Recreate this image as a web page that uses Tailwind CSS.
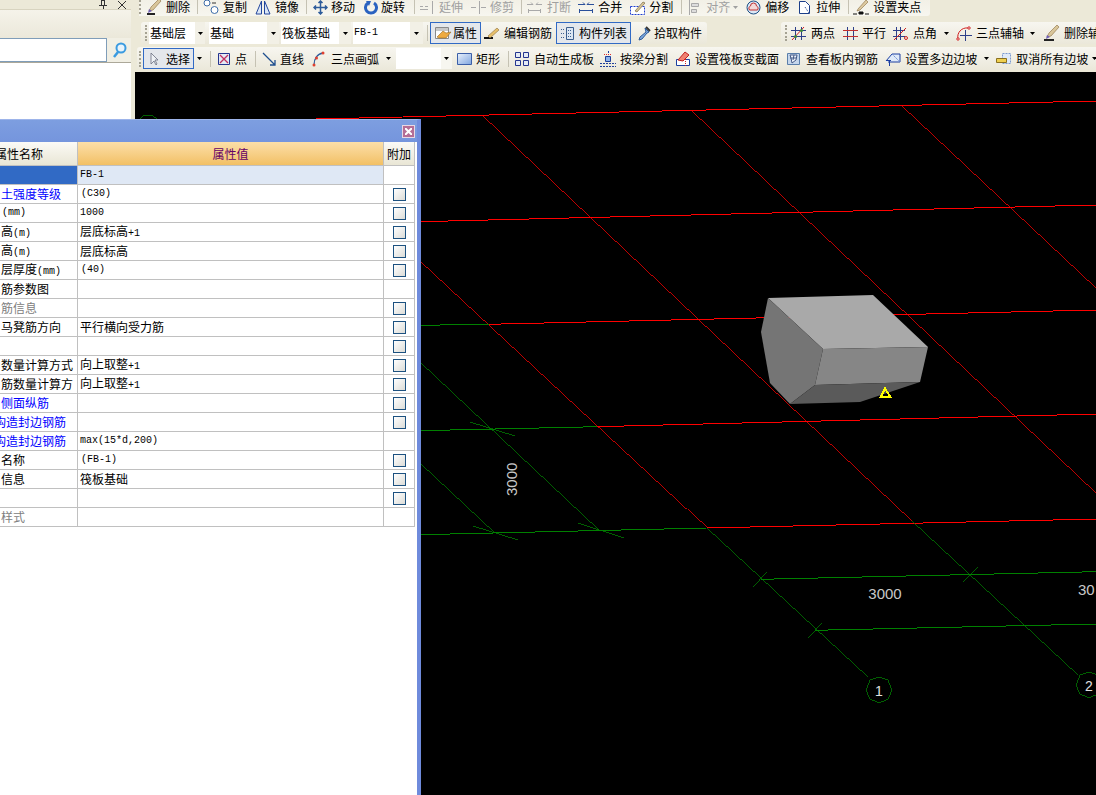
<!DOCTYPE html>
<html lang="zh">
<head>
<meta charset="utf-8">
<script src="https://cdn.jsdelivr.net/npm/@tailwindcss/browser@4"></script>
<title>筏板基础</title>
</head>
<body class="m-0">
<div class="relative flex w-[1096px] h-[795px] overflow-hidden bg-[#ece9d8] text-[12px] leading-[14px] text-black whitespace-nowrap font-['Noto_Sans_CJK_SC','Noto_Sans',sans-serif]">

  <!-- left panel -->
  <aside class="w-[135px] shrink-0 flex flex-col border-r-[4px] border-[#ece9d8]">
    <div class="h-[10px] flex items-center justify-end bg-[#ece9d8] border-b border-[#d8d4c0] pr-[5px] gap-[11px] overflow-hidden">
      <svg class="w-[8px] h-[10px]" viewBox="0 0 8 10"><path d="M2.500 0h3v5h-3zM0 5.500h8M4 5v5" fill="none" stroke="#333" shape-rendering="crispEdges"/></svg>
      <svg class="w-[8px] h-[8px]" viewBox="0 0 8 8"><path d="M0 0l8 8M8 0L0 8" stroke="#333"/></svg>
    </div>
    <div class="h-[28px] bg-gradient-to-b from-[#f5f3ea] to-[#ebe8da]"></div>
    <div class="h-[24px] flex items-center bg-[#f1efe4]">
      <div class="w-[107px] h-[24px] bg-white border border-[#7f9db9] border-l-0"></div>
      <svg class="ml-[5px] w-[15px] h-[16px]" viewBox="0 0 15 16"><circle cx="9" cy="6" r="4.500" fill="#e8f3fb" stroke="#3b9be0" stroke-width="2"/><path d="M6 10l-4 5" stroke="#3b9be0" stroke-width="2.500"/></svg>
    </div>
    <div class="flex-1 bg-white border-t border-[#aca899]"></div>
  </aside>

  <!-- main -->
  <main class="flex-1 min-w-0 flex flex-col overflow-hidden">
    <!-- row 1 -->
    <div class="h-[16px] pb-[2px] box-border flex items-center w-[791px] ml-[4px] -mr-[4px] shrink-0 bg-gradient-to-b from-[#f2f0e6] to-[#f7f6ef] rounded-br-[3px] overflow-hidden">
      <span class="w-[2px] h-[14px] shrink-0 border-l-2 border-dotted border-[#a5a293]"></span>
      <div class="flex items-center shrink-0 ml-[5px] gap-[4px]"><svg class="w-[16px] h-[16px]" viewBox="0 0 16 16"><path d="M1 15h8" stroke="#222" stroke-width="2"/><path d="M3 12l4-1 8-9-2-2-8 8z" fill="#d9c69a" stroke="#8a6d3f" stroke-width=".6"/><path d="M2 14l1-4 3 2z" fill="#6f5fb5"/></svg>删除</div>
      <span class="ml-[7px] w-px h-[14px] shrink-0 bg-[#c5c2b3]"></span>
      <div class="flex items-center shrink-0 ml-[5px] gap-[4px]"><svg class="w-[16px] h-[16px]" viewBox="0 0 16 16" fill="#fff" stroke="#3d6ca8"><circle cx="4" cy="4" r="3"/><circle cx="11.500" cy="11" r="3.500"/><path d="M9 4h4" stroke="#333"/></svg>复制</div>
      <div class="flex items-center shrink-0 ml-[8px] gap-[3px]"><svg class="w-[16px] h-[16px]" viewBox="0 0 16 16" fill="#dbe7f7" stroke="#24479c"><path d="M6.500 2v13H1zM9.500 2v13H15z"/></svg><span class="ml-[1px]">镜像</span></div>
      <span class="ml-[7px] w-px h-[14px] shrink-0 bg-[#c5c2b3]"></span>
      <div class="flex items-center shrink-0 ml-[6px] gap-[3px]"><svg class="w-[15px] h-[15px]" viewBox="0 0 15 15"><path d="M7.500 1v13M1 7.500h13M5.500 3l2-2 2 2M5.500 12l2 2 2-2M3 5.500l-2 2 2 2M12 5.500l2 2-2 2" fill="none" stroke="#2d5b9a" stroke-width="1.500"/></svg>移动</div>
      <div class="flex items-center shrink-0 ml-[9px] gap-[3px]"><svg class="w-[14px] h-[15px]" viewBox="0 0 14 15"><path d="M4 3a5.500 5.500 0 1 0 6 0" fill="none" stroke="#2a62c0" stroke-width="3"/><path d="M2 1l5 0-2 5z" fill="#2a62c0"/></svg>旋转</div>
      <span class="ml-[9px] w-px h-[14px] shrink-0 bg-[#c5c2b3]"></span>
      <div class="flex items-center shrink-0 ml-[5px] gap-[4px] text-[#a0a0a0]"><svg class="w-[15px] h-[15px]" viewBox="0 0 15 15"><path d="M0 6.500h3M5 6.500h3M0 9.500h8M12.500 1v13" stroke="#a9a9a9" fill="none"/></svg>延伸</div>
      <div class="flex items-center shrink-0 ml-[8px] gap-[4px] text-[#a0a0a0]"><svg class="w-[15px] h-[15px]" viewBox="0 0 15 15"><path d="M0 7.500h5M8.500 1v13M10 7.500h5" stroke="#a9a9a9" fill="none"/></svg>修剪</div>
      <span class="ml-[7px] w-px h-[14px] shrink-0 bg-[#c5c2b3]"></span>
      <div class="flex items-center shrink-0 ml-[5px] gap-[5px] text-[#a0a0a0]"><svg class="w-[15px] h-[15px]" viewBox="0 0 15 15"><path d="M0 4.500h6l-2-2M15 4.500H9l2-2M1 10.500h13M1.500 9v4M13.500 9v4" stroke="#a9a9a9" fill="none"/></svg>打断</div>
      <div class="flex items-center shrink-0 ml-[7px] gap-[4px]"><svg class="w-[16px] h-[15px]" viewBox="0 0 16 15"><path d="M0 4.500h7l-2-2M16 4.500H9l2-2M1 10.500h14M1.500 9v4M14.500 9v4" stroke="#2a4f9a" fill="none"/></svg>合并</div>
      <div class="flex items-center shrink-0 ml-[8px] gap-[4px]"><svg class="w-[15px] h-[15px]" viewBox="0 0 15 15"><path d="M.5 6.500h14v8H.500z" fill="#fff" stroke="#1e3fd0" stroke-dasharray="2 1"/><path d="M5 11l8-9 2 1-8 9z" fill="#d9c69a" stroke="#6a5a30" stroke-width=".6"/></svg>分割</div>
      <span class="ml-[8px] w-px h-[14px] shrink-0 bg-[#c5c2b3]"></span>
      <div class="flex items-center shrink-0 ml-[6px] gap-[6px] text-[#a0a0a0]"><svg class="w-[12px] h-[15px]" viewBox="0 0 12 15"><path d="M1.500 0v15M3.500 3.500h7v3h-7zM3.500 9.500h5v3h-5z" stroke="#a9a9a9" fill="#ddd"/></svg>对齐</div>
      <svg class="ml-[3px] w-[5px] h-[3px] shrink-0" viewBox="0 0 5 3"><path d="M0 0h5L2.500 3z" fill="#a0a0a0"/></svg>
      <div class="flex items-center shrink-0 ml-[8px] gap-[4px]"><svg class="w-[15px] h-[15px]" viewBox="0 0 15 15"><circle cx="7.500" cy="7.500" r="6.500" fill="#dbe7f5" stroke="#1c4f86"/><path d="M3.500 10a2.500 2.500 0 0 1 1-4 3 3 0 0 1 6 0 2.500 2.500 0 0 1 1 4z" fill="#f3d9d9" stroke="#c03030"/></svg>偏移</div>
      <div class="flex items-center shrink-0 ml-[8px] gap-[4px]"><svg class="w-[15px] h-[15px]" viewBox="0 0 15 15"><path d="M2.500 1.500h6l4 4v8h-10z" fill="#fff" stroke="#1c3f8a"/><path d="M8 7l4 6" stroke="#1c3f8a" stroke-dasharray="1 1"/></svg>拉伸</div>
      <span class="ml-[8px] w-px h-[14px] shrink-0 bg-[#c5c2b3]"></span>
      <div class="flex items-center shrink-0 ml-[4px] gap-[4px]"><svg class="w-[16px] h-[16px]" viewBox="0 0 16 16"><path d="M0 15h4M6 13h4v2H6zM12 15h4" stroke="#111" fill="#111"/><path d="M5 10l8-9 2 2-8 8-3 1z" fill="#dcc9a0" stroke="#8a6d3f" stroke-width=".6"/></svg>设置夹点</div>
    </div>

    <!-- row 2 -->
    <div class="mt-[6px] h-[22px] flex items-center shrink-0">
      <div class="w-[566px] h-[22px] shrink-0 ml-[6px] flex items-center bg-gradient-to-b from-[#f7f6f0] to-[#ebe8da] rounded-[3px] overflow-hidden">
        <span class="ml-[4px] w-[2px] h-[16px] shrink-0 border-l-2 border-dotted border-[#a5a293]"></span>
        <div class="ml-[2px] flex h-[22px] shrink-0"><div class="w-[46px] bg-white pl-[1px] flex items-center">基础层</div><div class="w-[10px] bg-[#f2f0e6] flex items-center justify-center"><svg class="w-[5px] h-[3px]" viewBox="0 0 5 3"><path d="M0 0h5L2.500 3z"/></svg></div></div>
        <div class="ml-[4px] flex h-[22px] shrink-0"><div class="w-[58px] bg-white pl-[1px] flex items-center">基础</div><div class="w-[12px] bg-[#f2f0e6] flex items-center justify-center"><svg class="w-[5px] h-[3px]" viewBox="0 0 5 3"><path d="M0 0h5L2.500 3z"/></svg></div></div>
        <div class="ml-[2px] flex h-[22px] shrink-0"><div class="w-[58px] bg-white pl-[1px] flex items-center">筏板基础</div><div class="w-[12px] bg-[#f2f0e6] flex items-center justify-center"><svg class="w-[5px] h-[3px]" viewBox="0 0 5 3"><path d="M0 0h5L2.500 3z"/></svg></div></div>
        <div class="ml-[2px] flex h-[22px] shrink-0"><div class="w-[57px] bg-white pl-[1px] flex items-center font-['Liberation_Mono',monospace] text-[10px]">FB-1</div><div class="w-[13px] bg-[#f2f0e6] flex items-center justify-center"><svg class="w-[5px] h-[3px]" viewBox="0 0 5 3"><path d="M0 0h5L2.500 3z"/></svg></div></div>
        <span class="ml-[4px] w-px h-[16px] shrink-0 bg-[#c5c2b3]"></span>
        <div class="ml-[2px] w-[51px] h-[22px] shrink-0 flex items-center bg-[#e4e7ec] border border-[#316ac5] box-border"><svg class="ml-[3px] w-[18px] h-[16px]" viewBox="0 0 18 16"><path d="M1.500 2.500h13v11h-13z" fill="#fff" stroke="#8a8a8a"/><path d="M2 3h12v3H2z" fill="#c8c8c8"/><path d="M3 12l6-6 3 2 5-1-5 6H5z" fill="#eeaa40" stroke="#9a6b20" stroke-width=".6"/></svg><span class="ml-[1px]">属性</span></div>
        <div class="ml-[3px] flex items-center shrink-0 gap-[4px]"><svg class="w-[16px] h-[16px]" viewBox="0 0 16 16"><path d="M0 13h9" stroke="#111" stroke-width="2"/><path d="M4 11l9-8 2 2-9 8z" fill="#e8c06a" stroke="#8a6d3f" stroke-width=".6"/></svg>编辑钢筋</div>
        <div class="ml-[4px] w-[75px] h-[22px] shrink-0 flex items-center bg-[#e4e7ec] border border-[#316ac5] box-border"><svg class="ml-[3px] w-[15px] h-[15px]" viewBox="0 0 15 15"><path d="M6.500 1.500h7v12h-7z" fill="#dce6f3" stroke="#3d5f8f"/><path d="M8 4.500h4M8 7.500h4M8 10.500h4M1 3.500h3M1 7.500h3M1 11.500h3" stroke="#3d5f8f" stroke-dasharray="1 1"/></svg><span class="ml-[4px]">构件列表</span></div>
        <div class="ml-[5px] flex items-center shrink-0 gap-[3px]"><svg class="w-[15px] h-[15px]" viewBox="0 0 15 15"><path d="M9 2l4 4-2 1-5 6-3 1 1-3 6-5z" fill="#7ea8dc" stroke="#2d5b9a"/><path d="M10 1l4 4" stroke="#333" stroke-width="2"/></svg>拾取构件</div>
      </div>
      <div class="ml-[74px] w-[315px] h-[22px] shrink-0 flex items-center bg-gradient-to-b from-[#f7f6f0] to-[#ebe8da] rounded-l-[3px] overflow-hidden">
        <span class="ml-[4px] w-[2px] h-[16px] shrink-0 border-l-2 border-dotted border-[#a5a293]"></span>
        <div class="ml-[4px] flex items-center shrink-0 gap-[5px]"><svg class="w-[15px] h-[15px]" viewBox="0 0 15 15"><path d="M4.500 1v13M10.500 1v13M0 4.500h15M0 10.500h15" stroke="#2d3f8a"/><path d="M1 14L13 1" stroke="#d02020"/><circle cx="4.500" cy="10.500" r="1.500" fill="#3a8a3a"/><circle cx="10.500" cy="4.500" r="1.500" fill="#3a8a3a"/></svg>两点</div>
        <div class="ml-[8px] flex items-center shrink-0 gap-[4px]"><svg class="w-[15px] h-[15px]" viewBox="0 0 15 15"><path d="M4.500 1v13M10.500 1v13" stroke="#2d3f8a"/><path d="M0 4.500h15M0 10.500h15" stroke="#c03030"/></svg>平行</div>
        <div class="ml-[7px] flex items-center shrink-0 gap-[5px]"><svg class="w-[15px] h-[15px]" viewBox="0 0 15 15"><path d="M3.500 1v13M7.500 1v13M0 4.500h12M0 10.500h12" stroke="#2d3f8a"/><path d="M1 14L13 2" stroke="#d02020"/><circle cx="13" cy="12" r="1.500" fill="none" stroke="#d02020"/></svg>点角</div>
        <svg class="ml-[7px] w-[5px] h-[3px] shrink-0" viewBox="0 0 5 3"><path d="M0 0h5L2.500 3z"/></svg>
        <div class="ml-[7px] flex items-center shrink-0 gap-[4px]"><svg class="w-[16px] h-[15px]" viewBox="0 0 16 15"><path d="M2 13A9 9 0 0 1 12 2" fill="none" stroke="#d02020"/><path d="M9.500 4v11M4 9.500h12" stroke="#2d3f8a"/><circle cx="2" cy="13" r="1.200" fill="#fff" stroke="#d02020"/><circle cx="13" cy="2" r="1.200" fill="#fff" stroke="#d02020"/></svg>三点辅轴</div>
        <svg class="ml-[6px] w-[5px] h-[3px] shrink-0" viewBox="0 0 5 3"><path d="M0 0h5L2.500 3z"/></svg>
        <div class="ml-[8px] flex items-center shrink-0 gap-[4px]"><svg class="w-[17px] h-[16px]" viewBox="0 0 17 16"><path d="M1 15h10" stroke="#222" stroke-width="2"/><path d="M4 12l4-1 8-9-2-2-8 8z" fill="#d9c69a" stroke="#8a6d3f" stroke-width=".6"/><path d="M3 14l1-4 3 2z" fill="#6f5fb5"/></svg>删除辅轴</div>
      </div>
    </div>

    <!-- row 3 -->
    <div class="mt-[3px] h-[23px] ml-[2px] -mr-[2px] flex items-center shrink-0 bg-gradient-to-b from-[#f7f6f0] to-[#ebe8da] rounded-l-[3px] overflow-hidden">
      <span class="ml-[2px] w-[2px] h-[16px] shrink-0 border-l-2 border-dotted border-[#a5a293]"></span>
      <div class="ml-[2px] w-[51px] h-[21px] shrink-0 flex items-center bg-[#e4e7ec] border border-[#316ac5] box-border"><svg class="ml-[6px] w-[9px] h-[14px]" viewBox="0 0 9 14"><path d="M1 1v11l3-3 2 4 1-1-2-4h3z" fill="#eef1f5" stroke="#6a6f80" stroke-width=".8"/></svg><span class="ml-[7px]">选择</span></div>
      <svg class="ml-[3px] w-[5px] h-[3px] shrink-0" viewBox="0 0 5 3"><path d="M0 0h5L2.500 3z"/></svg>
      <span class="ml-[8px] w-px h-[16px] shrink-0 bg-[#c5c2b3]"></span>
      <div class="ml-[7px] flex items-center shrink-0 gap-[5px]"><svg class="w-[12px] h-[12px]" viewBox="0 0 12 12"><path d="M.5.500h11v11H.500z" fill="#e4eaf5" stroke="#24358f"/><path d="M2 2l8 8M10 2l-8 8" stroke="#c03060" stroke-width="1.300"/></svg>点</div>
      <span class="ml-[8px] w-px h-[16px] shrink-0 bg-[#c5c2b3]"></span>
      <div class="ml-[6px] flex items-center shrink-0 gap-[4px]"><svg class="w-[14px] h-[14px]" viewBox="0 0 14 14"><path d="M1 1l12 12M13 8v5H8" fill="none" stroke="#1f4f8f" stroke-width="1.300"/></svg>直线</div>
      <div class="ml-[8px] flex items-center shrink-0 gap-[6px]"><svg class="w-[13px] h-[16px]" viewBox="0 0 13 16"><path d="M2 14C2 8 5 3 11 2" fill="none" stroke="#2a5a9a" stroke-width="1.300"/><circle cx="2" cy="14" r="1.500" fill="#e04030"/><circle cx="4.500" cy="7" r="1.500" fill="#e04030"/><circle cx="11" cy="2" r="1.500" fill="#e04030"/></svg>三点画弧</div>
      <svg class="ml-[7px] w-[5px] h-[3px] shrink-0" viewBox="0 0 5 3"><path d="M0 0h5L2.500 3z"/></svg>
      <div class="ml-[5px] flex h-[21px] shrink-0"><div class="w-[45px] bg-white"></div><div class="w-[11px] bg-[#f7f6f0] flex items-center justify-center"><svg class="w-[5px] h-[3px]" viewBox="0 0 5 3"><path d="M0 0h5L2.500 3z"/></svg></div></div>
      <div class="ml-[5px] flex items-center shrink-0 gap-[4px]"><svg class="w-[15px] h-[12px]" viewBox="0 0 15 12"><defs><linearGradient id="r1" x1="0" y1="0" x2="1" y2="1"><stop offset="0" stop-color="#eaf1fb"/><stop offset="1" stop-color="#7fa5e0"/></linearGradient></defs><path d="M.5.500h14v11H.500z" fill="url(#r1)" stroke="#3b5fa8"/></svg>矩形</div>
      <span class="ml-[8px] w-px h-[16px] shrink-0 bg-[#c5c2b3]"></span>
      <div class="ml-[6px] flex items-center shrink-0 gap-[5px]"><svg class="w-[14px] h-[14px]" viewBox="0 0 14 14" fill="#e4eaf5" stroke="#24358f"><path d="M.5.500h5v5h-5zM8.500.500h5v5h-5zM.5 8.500h5v5h-5zM8.500 8.500h5v5h-5z"/></svg>自动生成板</div>
      <div class="ml-[6px] flex items-center shrink-0 gap-[4px]"><svg class="w-[16px] h-[16px]" viewBox="0 0 16 16"><path d="M5.500 5.500h5v5h-5z" fill="#8eb4ea" stroke="#1f3f9a"/><path d="M0 12.500h16M0 15.500h16M8.500 0v4" stroke="#1f3f9a" stroke-dasharray="2 1"/><path d="M4 3.500h8" stroke="#e03030" stroke-dasharray="1 1"/></svg>按梁分割</div>
      <div class="ml-[7px] flex items-center shrink-0 gap-[4px]"><svg class="w-[16px] h-[16px]" viewBox="0 0 16 16"><path d="M1.500 8.500h13v6h-13z" fill="#fff" stroke="#1c3fa0"/><path d="M3 9l7-8 4 3-6 6z" fill="#f08070" stroke="#c02020"/><path d="M10.500 8v8" stroke="#d02020" stroke-dasharray="1 1"/></svg>设置筏板变截面</div>
      <div class="ml-[7px] flex items-center shrink-0 gap-[5px]"><svg class="w-[15px] h-[15px]" viewBox="0 0 15 15"><path d="M1.500 2.500h12v11h-12z" fill="#c5d6ec" stroke="#5a7eaa"/><path d="M4 4h7l-1 5-4 3-1-5zM4 7h6M8 4l-1 5" fill="#eef3fa" stroke="#445a88"/></svg>查看板内钢筋</div>
      <div class="ml-[7px] flex items-center shrink-0 gap-[4px]"><svg class="w-[16px] h-[16px]" viewBox="0 0 16 16"><path d="M1 10L7 3h8v8H3" fill="#dfeaf8" stroke="#1c3fa0"/><path d="M4.500 15V9M1 9.500h5" stroke="#1c3fa0"/><path d="M7 3l8 8" stroke="#6a8ad0" stroke-dasharray="2 1"/></svg>设置多边边坡</div>
      <svg class="ml-[7px] w-[5px] h-[3px] shrink-0" viewBox="0 0 5 3"><path d="M0 0h5L2.500 3z"/></svg>
      <div class="ml-[7px] flex items-center shrink-0 gap-[4px]"><svg class="w-[16px] h-[15px]" viewBox="0 0 16 15"><path d="M6.500 2.500h8v10h-8z" fill="#dfeaf8" stroke="#7a9ad0" stroke-dasharray="2 1"/><path d="M.5 7.500h10v4H.500z" fill="#efd050" stroke="#8a7020"/></svg>取消所有边坡</div>
      <svg class="ml-[4px] w-[5px] h-[3px] shrink-0" viewBox="0 0 5 3"><path d="M0 0h5L2.500 3z"/></svg>
    </div>

    <!-- 3D canvas -->
    <div class="mt-[2px] flex-1 min-h-0 bg-black overflow-hidden">
      <svg class="block w-[961px] h-[723px]" viewBox="135 72 961 723" fill="none" font-family="'Liberation Sans',sans-serif">
        <g shape-rendering="crispEdges" stroke="#ff0000" stroke-width="1">
          <path d="M316 119L1096 101M420 221.700L1096 205M489 324.300L1096 310M597 426.700L1096 414M707 528L1096 519"/>
          <path d="M420 261L707 528M482 115L912 521M692 111L1096 493M902 106L1096 288" stroke-width=".75"/>
        </g>
        <g shape-rendering="crispEdges" stroke="#008000" stroke-width="1">
          <path d="M420 325.300L489 324.300M420 430.700L597 426.700M420 534.700L707 528M760.700 579.300L1096 571.700M815 630.300L1096 624"/>
          <path d="M707 528L868 677M912 521L1078 675M420 362L599 530M420 463L495 533" stroke-width=".75"/>
          <path d="M470 422L515 436M473 526L518 540M578 523L624 538M753 587L767 572M808 638L822 623M963 582L978 567" stroke-width=".75"/>
          <path d="M139 120L144 115L152 115L158 120" stroke-width=".75"/>
          <polygon stroke-width=".75" points="879,677 888,680 892,690 888,699 879,703 870,699 866,690 870,680"/>
          <polygon stroke-width=".75" points="1089,672 1098,675 1102,685 1098,694 1089,698 1080,694 1076,685 1080,675"/>
        </g>
        <polygon points="768,298 873,295 928,347 823,349" fill="#a9a9a9"/>
        <polygon points="768,298 823,349 815,385 790,404 770,383 761,332" fill="#757575"/>
        <polygon points="823,349 928,347 920,382 815,385" fill="#868686"/>
        <polygon points="815,385 920,382 860,402 790,404" fill="#5a5a5a"/>
        <polygon points="885,388.500 890,396.500 881,396.500" stroke="#ffff00" stroke-width="2" shape-rendering="crispEdges"/>
        <g fill="#c8c8c8" font-size="15">
          <text x="885" y="599" text-anchor="middle">3000</text>
          <text x="1078" y="595">30</text>
          <text transform="translate(517 496) rotate(-90)">3000</text>
          <text x="879" y="696" text-anchor="middle" fill="#e0e0e0" font-size="14">1</text>
          <text x="1089" y="691" text-anchor="middle" fill="#e0e0e0" font-size="14">2</text>
        </g>
      </svg>
    </div>
  </main>

  <!-- properties dialog -->
  <section class="absolute left-0 top-[119px] w-[421px] h-[676px] flex flex-col bg-[#7690dc] border-r-[4px] border-t border-[#6f8bdc] border-t-[#9db4ea] box-border">
    <div class="h-[22px] shrink-0 flex items-center justify-end pr-[2px] bg-gradient-to-b from-[#7d9ee0] to-[#7595dd]">
      <div class="w-[13px] h-[13px] flex items-center justify-center bg-[#b56e96] border border-[#e8d8e4]"><svg class="w-[7px] h-[7px]" viewBox="0 0 7 7"><path d="M0 0l7 7M7 0L0 7" stroke="#fff" stroke-width="2"/></svg></div>
    </div>
    <div class="flex-1 bg-white pr-[2px]">
      <div class="w-[415px] border-r border-[#c0c0c0] box-border">
        <div class="flex h-[24px] border-b border-[#c0c0c0] box-border">
          <div class="w-[78px] shrink-0 overflow-hidden flex items-center border-r border-[#c0c0c0] bg-gradient-to-b from-[#fbfaf6] to-[#e9e6d5]"><span class="ml-[-5px]">属性名称</span></div>
          <div class="w-[306px] shrink-0 flex items-center justify-center border-r border-[#c0c0c0] text-[#660066] bg-gradient-to-b from-[#fcdfa8] to-[#f2c064]">属性值</div>
          <div class="flex-1 flex items-center justify-center bg-gradient-to-b from-[#fbfaf6] to-[#e9e6d5]">附加</div>
        </div>

        <div class="flex h-[19px] border-b border-[#c0c0c0] box-border"><div class="w-[78px] shrink-0 border-r border-[#c0c0c0] bg-[#316ac5]"></div><div class="w-[306px] shrink-0 border-r border-[#c0c0c0] bg-[#dfe8f5] pl-[2px] flex items-center font-['Liberation_Mono',monospace] text-[10px]">FB-1</div><div class="flex-1"></div></div>

        <div class="flex h-[19px] border-b border-[#c0c0c0] box-border"><div class="w-[78px] shrink-0 overflow-hidden border-r border-[#c0c0c0] flex items-center pl-[1px] text-[#0000ff]">土强度等级</div><div class="w-[306px] shrink-0 border-r border-[#c0c0c0] pl-[3px] flex items-center font-['Liberation_Mono',monospace] text-[10px]">(C30)</div><div class="flex-1 flex items-center justify-center"><span class="w-[13px] h-[13px] border border-[#1c5180] bg-gradient-to-br from-white to-[#dcdcd7]"></span></div></div>

        <div class="flex h-[19px] border-b border-[#c0c0c0] box-border"><div class="w-[78px] shrink-0 overflow-hidden border-r border-[#c0c0c0] flex items-center pl-[2px] font-['Liberation_Mono',monospace] text-[10px]">(mm)</div><div class="w-[306px] shrink-0 border-r border-[#c0c0c0] pl-[2px] flex items-center font-['Liberation_Mono',monospace] text-[10px]">1000</div><div class="flex-1 flex items-center justify-center"><span class="w-[13px] h-[13px] border border-[#1c5180] bg-gradient-to-br from-white to-[#dcdcd7]"></span></div></div>

        <div class="flex h-[19px] border-b border-[#c0c0c0] box-border"><div class="w-[78px] shrink-0 overflow-hidden border-r border-[#c0c0c0] flex items-center pl-[1px]"><span>高<span class="font-['Liberation_Mono',monospace] text-[10px]">(m)</span></span></div><div class="w-[306px] shrink-0 border-r border-[#c0c0c0] pl-[2px] flex items-center"><span>层底标高<span class="font-['Liberation_Mono',monospace] text-[10px]">+1</span></span></div><div class="flex-1 flex items-center justify-center"><span class="w-[13px] h-[13px] border border-[#1c5180] bg-gradient-to-br from-white to-[#dcdcd7]"></span></div></div>

        <div class="flex h-[19px] border-b border-[#c0c0c0] box-border"><div class="w-[78px] shrink-0 overflow-hidden border-r border-[#c0c0c0] flex items-center pl-[1px]"><span>高<span class="font-['Liberation_Mono',monospace] text-[10px]">(m)</span></span></div><div class="w-[306px] shrink-0 border-r border-[#c0c0c0] pl-[2px] flex items-center">层底标高</div><div class="flex-1 flex items-center justify-center"><span class="w-[13px] h-[13px] border border-[#1c5180] bg-gradient-to-br from-white to-[#dcdcd7]"></span></div></div>

        <div class="flex h-[19px] border-b border-[#c0c0c0] box-border"><div class="w-[78px] shrink-0 overflow-hidden border-r border-[#c0c0c0] flex items-center pl-[1px]"><span>层厚度<span class="font-['Liberation_Mono',monospace] text-[10px]">(mm)</span></span></div><div class="w-[306px] shrink-0 border-r border-[#c0c0c0] pl-[3px] flex items-center font-['Liberation_Mono',monospace] text-[10px]">(40)</div><div class="flex-1 flex items-center justify-center"><span class="w-[13px] h-[13px] border border-[#1c5180] bg-gradient-to-br from-white to-[#dcdcd7]"></span></div></div>

        <div class="flex h-[19px] border-b border-[#c0c0c0] box-border"><div class="w-[78px] shrink-0 overflow-hidden border-r border-[#c0c0c0] flex items-center pl-[1px]">筋参数图</div><div class="w-[306px] shrink-0 border-r border-[#c0c0c0]"></div><div class="flex-1"></div></div>

        <div class="flex h-[19px] border-b border-[#c0c0c0] box-border"><div class="w-[78px] shrink-0 overflow-hidden border-r border-[#c0c0c0] flex items-center pl-[1px] text-[#808080]">筋信息</div><div class="w-[306px] shrink-0 border-r border-[#c0c0c0]"></div><div class="flex-1 flex items-center justify-center"><span class="w-[13px] h-[13px] border border-[#1c5180] bg-gradient-to-br from-white to-[#dcdcd7]"></span></div></div>

        <div class="flex h-[19px] border-b border-[#c0c0c0] box-border"><div class="w-[78px] shrink-0 overflow-hidden border-r border-[#c0c0c0] flex items-center pl-[1px]">马凳筋方向</div><div class="w-[306px] shrink-0 border-r border-[#c0c0c0] pl-[2px] flex items-center">平行横向受力筋</div><div class="flex-1 flex items-center justify-center"><span class="w-[13px] h-[13px] border border-[#1c5180] bg-gradient-to-br from-white to-[#dcdcd7]"></span></div></div>

        <div class="flex h-[19px] border-b border-[#c0c0c0] box-border"><div class="w-[78px] shrink-0 border-r border-[#c0c0c0]"></div><div class="w-[306px] shrink-0 border-r border-[#c0c0c0]"></div><div class="flex-1 flex items-center justify-center"><span class="w-[13px] h-[13px] border border-[#1c5180] bg-gradient-to-br from-white to-[#dcdcd7]"></span></div></div>

        <div class="flex h-[19px] border-b border-[#c0c0c0] box-border"><div class="w-[78px] shrink-0 overflow-hidden border-r border-[#c0c0c0] flex items-center pl-[1px]">数量计算方式</div><div class="w-[306px] shrink-0 border-r border-[#c0c0c0] pl-[2px] flex items-center"><span>向上取整<span class="font-['Liberation_Mono',monospace] text-[10px]">+1</span></span></div><div class="flex-1 flex items-center justify-center"><span class="w-[13px] h-[13px] border border-[#1c5180] bg-gradient-to-br from-white to-[#dcdcd7]"></span></div></div>

        <div class="flex h-[19px] border-b border-[#c0c0c0] box-border"><div class="w-[78px] shrink-0 overflow-hidden border-r border-[#c0c0c0] flex items-center pl-[1px]">筋数量计算方</div><div class="w-[306px] shrink-0 border-r border-[#c0c0c0] pl-[2px] flex items-center"><span>向上取整<span class="font-['Liberation_Mono',monospace] text-[10px]">+1</span></span></div><div class="flex-1 flex items-center justify-center"><span class="w-[13px] h-[13px] border border-[#1c5180] bg-gradient-to-br from-white to-[#dcdcd7]"></span></div></div>

        <div class="flex h-[19px] border-b border-[#c0c0c0] box-border"><div class="w-[78px] shrink-0 overflow-hidden border-r border-[#c0c0c0] flex items-center pl-[1px] text-[#0000ff]">侧面纵筋</div><div class="w-[306px] shrink-0 border-r border-[#c0c0c0]"></div><div class="flex-1 flex items-center justify-center"><span class="w-[13px] h-[13px] border border-[#1c5180] bg-gradient-to-br from-white to-[#dcdcd7]"></span></div></div>

        <div class="flex h-[19px] border-b border-[#c0c0c0] box-border"><div class="w-[78px] shrink-0 overflow-hidden border-r border-[#c0c0c0] flex items-center text-[#0000ff]"><span class="ml-[-6px]">构造封边钢筋</span></div><div class="w-[306px] shrink-0 border-r border-[#c0c0c0]"></div><div class="flex-1 flex items-center justify-center"><span class="w-[13px] h-[13px] border border-[#1c5180] bg-gradient-to-br from-white to-[#dcdcd7]"></span></div></div>

        <div class="flex h-[19px] border-b border-[#c0c0c0] box-border"><div class="w-[78px] shrink-0 overflow-hidden border-r border-[#c0c0c0] flex items-center text-[#0000ff]"><span class="ml-[-6px]">构造封边钢筋</span></div><div class="w-[306px] shrink-0 border-r border-[#c0c0c0] pl-[2px] flex items-center font-['Liberation_Mono',monospace] text-[10px]">max(15*d,200)</div><div class="flex-1"></div></div>

        <div class="flex h-[19px] border-b border-[#c0c0c0] box-border"><div class="w-[78px] shrink-0 overflow-hidden border-r border-[#c0c0c0] flex items-center pl-[1px]">名称</div><div class="w-[306px] shrink-0 border-r border-[#c0c0c0] pl-[3px] flex items-center font-['Liberation_Mono',monospace] text-[10px]">(FB-1)</div><div class="flex-1 flex items-center justify-center"><span class="w-[13px] h-[13px] border border-[#1c5180] bg-gradient-to-br from-white to-[#dcdcd7]"></span></div></div>

        <div class="flex h-[19px] border-b border-[#c0c0c0] box-border"><div class="w-[78px] shrink-0 overflow-hidden border-r border-[#c0c0c0] flex items-center pl-[1px]">信息</div><div class="w-[306px] shrink-0 border-r border-[#c0c0c0] pl-[2px] flex items-center">筏板基础</div><div class="flex-1 flex items-center justify-center"><span class="w-[13px] h-[13px] border border-[#1c5180] bg-gradient-to-br from-white to-[#dcdcd7]"></span></div></div>

        <div class="flex h-[19px] border-b border-[#c0c0c0] box-border"><div class="w-[78px] shrink-0 border-r border-[#c0c0c0]"></div><div class="w-[306px] shrink-0 border-r border-[#c0c0c0]"></div><div class="flex-1 flex items-center justify-center"><span class="w-[13px] h-[13px] border border-[#1c5180] bg-gradient-to-br from-white to-[#dcdcd7]"></span></div></div>

        <div class="flex h-[19px] border-b border-[#c0c0c0] box-border"><div class="w-[78px] shrink-0 overflow-hidden border-r border-[#c0c0c0] flex items-center pl-[1px] text-[#808080]">样式</div><div class="w-[306px] shrink-0 border-r border-[#c0c0c0]"></div><div class="flex-1"></div></div>
      </div>
    </div>
  </section>
</div>
</body>
</html>
